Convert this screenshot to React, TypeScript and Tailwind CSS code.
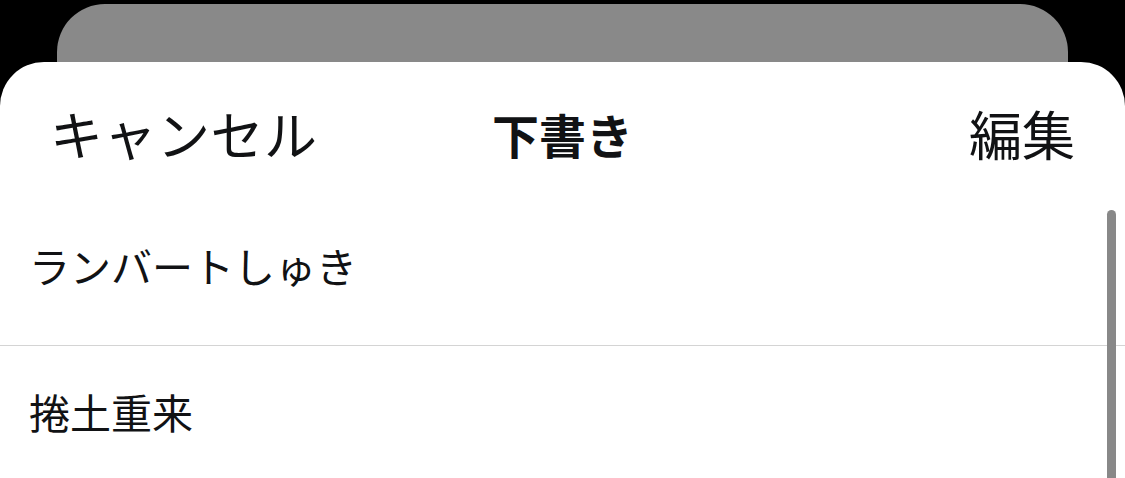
const font = {
  fontFamily: '"Noto Sans CJK JP", "Noto Sans", sans-serif',
};

const drafts = [
  { id: 1, title: "ランバートしゅき" },
  { id: 2, title: "捲土重来" },
];

export default function App() {
  return (
    <div className="w-[1125px] h-[478px] bg-black overflow-hidden" style={font}>
      <div className="mx-[57px] h-[58px] mt-[4px] bg-[#898989] rounded-t-[48px]" />
      <div className="relative bg-white rounded-t-[44px] h-[416px] overflow-hidden text-[#111214]">
        <div className="grid grid-cols-[1fr_auto_1fr] items-center h-[142px] pl-[50px] pr-[50px]">
          <span className="text-[53px] leading-none tracking-[0.5px] justify-self-start">キャンセル</span>
          <span className="text-[47px] leading-none font-bold">下書き</span>
          <span className="text-[53px] leading-none justify-self-end">編集</span>
        </div>
        {drafts.map((d, i) => (
          <div key={d.id}>
            {i > 0 && <div className="h-px bg-[#d4d4d4]" />}
            <div
              className={
                i === 0
                  ? "flex items-center h-[141px] pb-[18px] pl-[29px]"
                  : "flex items-center h-[130px] pl-[29px]"
              }
            >
              <span className="text-[41px] leading-none">{d.title}</span>
            </div>
          </div>
        ))}
        <div className="absolute right-[9px] top-[148px] w-[9px] h-[300px] bg-[#888888] rounded-t-full" />
      </div>
    </div>
  );
}
